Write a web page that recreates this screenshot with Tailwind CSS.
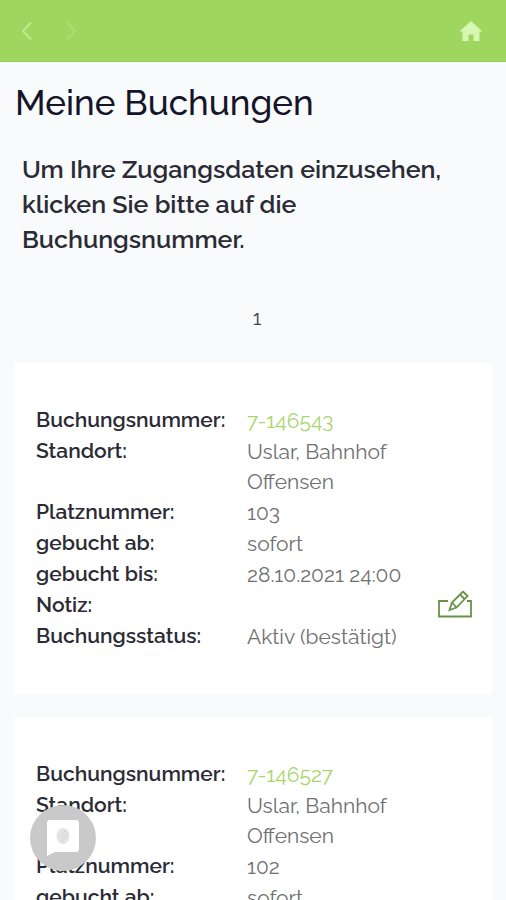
<!DOCTYPE html>
<html lang="de">
<head>
<meta charset="utf-8">
<meta name="viewport" content="width=device-width, initial-scale=1">
<title>Meine Buchungen</title>
<script src="https://cdn.jsdelivr.net/npm/@tailwindcss/browser@4"></script>
</head>
<body class="flex h-screen flex-col overflow-hidden bg-[#f8fafc] font-[Raleway,Lato,sans-serif] text-[#2b2b35]">
<header class="flex h-[62px] shrink-0 items-center border-b border-[#95ce55] bg-[#9fd65f] px-[13px]">
  <button type="button" aria-label="Zurück" class="flex h-11 w-7 items-center justify-center text-[#c0ea90]">
    <svg class="h-5 w-3" viewBox="0 0 12 20" fill="none" stroke="currentColor" stroke-width="2"><path d="M10 1.500 2 10l8 8.500"/></svg>
  </button>
  <button type="button" aria-label="Vorwärts" disabled class="ml-4 flex h-11 w-7 items-center justify-center text-[#addd74]">
    <svg class="h-5 w-3" viewBox="0 0 12 20" fill="none" stroke="currentColor" stroke-width="2"><path d="m2 1.500 8 8.500-8 8.500"/></svg>
  </button>
  <a href="#" aria-label="Startseite" class="ml-auto flex size-11 items-center justify-center text-[#d6f7b2]">
    <svg class="h-5 w-6" viewBox="0 0 24 20" fill="currentColor"><path d="M12 0 .5 10.500H3.500V20h6v-6.500h5V20h6v-9.500h3z"/></svg>
  </a>
</header>
<main class="min-h-0 flex-1 overflow-y-auto px-[14px] [scrollbar-width:none]">
  <h1 class="pt-[19px] pl-px text-[35px] leading-[44px] font-medium text-[#15152a]">Meine Buchungen</h1>
  <p class="mt-[27px] px-2 text-[25px] leading-[35px] font-semibold">Um Ihre Zugangsdaten einzusehen,<br>klicken Sie bitte auf die<br>Buchungsnummer.</p>
  <nav aria-label="Seiten" class="mt-11 flex justify-center pl-2"><a href="#" aria-current="page" class="px-2 text-xl leading-[34px] text-[#444]">1</a></nav>
  <div class="mt-7 flex flex-col gap-[23px] pb-6">
    <article class="bg-white px-[22px] pt-[42px] pb-[42px]">
      <dl class="grid grid-cols-[211px_1fr] gap-y-px pb-px text-[21px] leading-[30px] [&_dd]:relative [&_dd]:top-px [&_dd]:text-[#707070] [&_dt]:font-semibold">
        <dt>Buchungsnummer:</dt><dd><a href="#" class="text-[#a9d66e]">7-146543</a></dd>
        <dt>Standort:</dt><dd>Uslar, Bahnhof<br>Offensen</dd>
        <dt>Platznummer:</dt><dd>103</dd>
        <dt>gebucht ab:</dt><dd>sofort</dd>
        <dt>gebucht bis:</dt><dd>28.10.2021 24:00</dd>
        <dt>Notiz:</dt><dd class="-mr-[3px] flex justify-end"><button type="button" aria-label="Notiz bearbeiten" class="h-7 text-[#669447]"><svg class="h-7 w-9" viewBox="0 0 36 28" fill="none" stroke="currentColor" stroke-width="1.800"><path d="M11 10H2v15.500h32V10h-4M12.500 19l2.500-7.500L26 .5l4.500 4.500-11 11.500zM15 11.500l4.500 5M23 3.500l4.500 4.500"/></svg></button></dd>
        <dt>Buchungsstatus:</dt><dd>Aktiv (bestätigt)</dd>
      </dl>
    </article>
    <article class="bg-white px-[22px] pt-[42px] pb-[42px]">
      <dl class="grid grid-cols-[211px_1fr] gap-y-px pb-px text-[21px] leading-[30px] [&_dd]:relative [&_dd]:top-px [&_dd]:text-[#707070] [&_dt]:font-semibold">
        <dt>Buchungsnummer:</dt><dd><a href="#" class="text-[#a9d66e]">7-146527</a></dd>
        <dt>Standort:</dt><dd>Uslar, Bahnhof<br>Offensen</dd>
        <dt>Platznummer:</dt><dd>102</dd>
        <dt>gebucht ab:</dt><dd>sofort</dd>
      </dl>
    </article>
  </div>
</main>
<button type="button" aria-label="Chat öffnen" class="fixed bottom-[29px] left-[30px] flex size-[66px] items-center justify-center rounded-full bg-[#c9c9c9]">
  <svg class="h-9 w-8" viewBox="0 0 32 36"><path fill="#fff" d="M3 0h26q3 0 3 3v26q0 3-3 3H8l-8 4V3q0-3 3-3z"/><ellipse cx="16" cy="16" rx="6.500" ry="8" fill="#e4e4e4"/><path d="m12 18 7-8m-6 11 8-9m-6 10 6-7" stroke="#d4d4d4" fill="none"/></svg>
</button>
</body>
</html>
